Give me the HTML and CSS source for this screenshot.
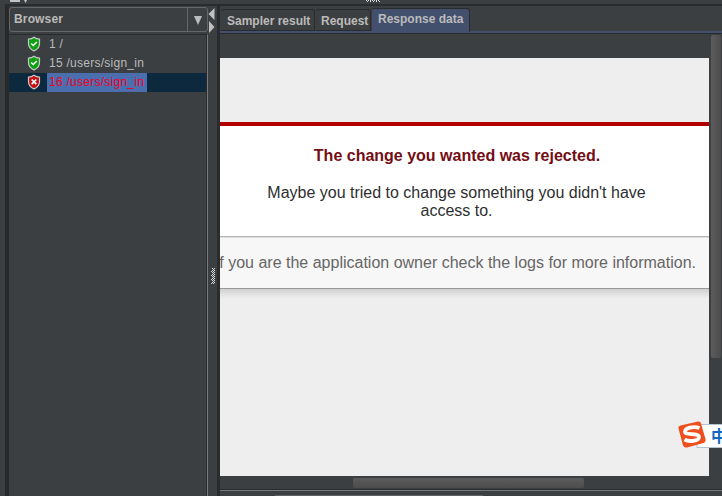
FILE: index.html
```html
<!DOCTYPE html>
<html lang="en">
<head>
<meta charset="utf-8">
<title>Results Tree</title>
<link rel="stylesheet" href="styles.css">
</head>
<body>
<svg class="defs" width="0" height="0">
  <symbol id="shield" viewBox="0 0 14 16">
    <path d="M7 1.200C5.400 2.400 3.500 3 1.500 3.200V7.500C1.500 11 3.500 13.500 7 14.900C10.500 13.500 12.500 11 12.500 7.500V3.200C10.500 3 8.600 2.400 7 1.200Z" fill="currentColor" stroke="#c8c8c8" stroke-width="1.200"/>
  </symbol>
</svg>
<div class="app">
  <header class="top">
    <svg class="top-arrows" width="24" height="4"><path d="M2 0H12V2H2ZM16 0H19L17.500 3Z" fill="#c0c2c4"/></svg>
    <svg class="top-grip" width="16" height="3"><path d="M0 .5H14" stroke="#ddd" stroke-dasharray="1 1"/><path d="M1 1.500H15" stroke="#ddd" stroke-dasharray="1 2"/></svg>
  </header>
  <main class="body">
    <aside class="left">
      <div class="combo"><span class="combo-text"><span class="t-browser">Browser</span></span><span class="combo-btn"><svg width="8" height="10"><path d="M0 0H8L4 9Z" fill="#bbb"/></svg></span></div>
      <div class="tree">
        <div class="row"><svg class="icon ok" width="14" height="16"><use href="#shield"/><path d="M4.200 7.500L6.300 9.500L9.800 5.900" fill="none" stroke="#fff" stroke-width="1.500"/></svg><span class="label">1 /</span></div>
        <div class="row"><svg class="icon ok" width="14" height="16"><use href="#shield"/><path d="M4.200 7.500L6.300 9.500L9.800 5.900" fill="none" stroke="#fff" stroke-width="1.500"/></svg><span class="label">15 /users/sign_in</span></div>
        <div class="row selected"><svg class="icon bad" width="14" height="16"><use href="#shield"/><path d="M4.700 5.500L9.300 10.100M9.300 5.500L4.700 10.100" fill="none" stroke="#fff" stroke-width="1.700"/></svg><span class="label">16 /users/sign_in</span></div>
      </div>
    </aside>
    <div class="divider">
      <svg class="div-arrows" width="8" height="28"><path d="M6.500 2V14L.500 8ZM1 15V27L6.500 21Z" fill="#c0c0c0"/></svg>
      <svg class="grip" width="5" height="16"><path d="M1.500 0V15" stroke="#ddd" stroke-dasharray="1 3"/><path d="M2.500 1V16" stroke="#ddd" stroke-dasharray="1 1"/><path d="M3.500 0V15" stroke="#ddd" stroke-dasharray="1 1"/><path d="M1.500 2V16" stroke="#ddd" stroke-dasharray="1 3"/><path d="M.500 3V16" stroke="#ccc" stroke-dasharray="1 3"/></svg>
    </div>
    <section class="right">
      <nav class="tabs">
        <div class="tab t1"><span>Sampler result</span></div>
        <div class="tab t2"><span>Request</span></div>
        <div class="tab t3 active"><span>Response data</span></div>
      </nav>
      <div class="view">
        <div class="page">
          <div class="dialog">
            <h1>The change you wanted was rejected.</h1>
            <p>Maybe you tried to change something you didn't have<br>access to.</p>
          </div>
          <div class="hint"><span>If you are the application owner check the logs for more information.</span></div>
          <div class="shade"></div>
        </div>
        <div class="vbar"><div class="vthumb"></div></div>
      </div>
      <div class="hbar"><div class="hthumb"></div></div>
      <div class="foot"><div class="fthumb"></div></div>
    </section>
  </main>
  <div class="ime">
    <svg width="46" height="30" viewBox="0 0 46 30">
      <path d="M20 4.500H46V27.500H20Z" fill="#fff" stroke="#b5c3ce"/>
      <path d="M3.500 5.500L21 1.500Q23.500 1 24 3.500L28.500 19Q29 22 26.500 23L10 27.500Q7 28 6 25.500L1.500 8.500Q1 6 3.500 5.500Z" fill="#ed4f1d"/>
      <path d="M22.500 8C16 5.800 8 8 8 11.700C8 15.500 22 12.500 22 17C22 21.300 12 22 7.500 19.500" fill="none" stroke="#fff" stroke-width="3.800"/>
    </svg>
    <span class="zh">中</span>
  </div>
</div>
</body>
</html>
```
FILE: styles.css
```css
* { box-sizing: border-box; }
body { margin: 0; overflow: hidden; background: #3c3f41; font-family: "Liberation Sans", "Noto Sans CJK SC", sans-serif; }
svg { display: block; }
.defs { position: absolute; }
.app { position: relative; width: 722px; height: 496px; overflow: hidden; display: flex; flex-direction: column; }
.top { height: 6px; border-bottom: 2px solid #292b2d; margin-left: 5px; display: flex; flex: none; }
.top-arrows { margin-left: 3px; }
.top-grip { margin-left: 334px; }
.body { flex: 1; min-height: 0; display: flex; margin-left: 5px; }
.left { width: 203px; border-left: 4px solid #27292b; display: flex; flex-direction: column; }
.combo { height: 25px; margin-top: 1px; border: 1px solid #646668; border-radius: 3px; display: flex; color: #bbb; font-size: 12px; font-weight: bold; flex: none; }
.combo-text { flex: 1; padding: 4px 0 0 4px; line-height: 15px; }
.t-browser { letter-spacing: .15px; }
.combo-btn { width: 20px; border-left: 1px solid #646668; padding: 8px 0 0 6px; }
.tree { flex: 1; margin-top: 2px; border-top: 1px solid #292b2d; border-right: 1px solid #77797b; box-shadow: inset -1px 0 #292b2d; }
.row { height: 19px; display: flex; align-items: flex-start; padding-left: 18px; margin-right: 1px; color: #bbb; font-size: 12px; letter-spacing: .26px; }
.icon { margin-top: 1px; }
.row .label { margin-left: 6px; padding: 0 3px 0 2px; height: 19px; line-height: 18px; white-space: nowrap; }
.selected { background: #0d293e; color: #f00020; }
.selected .label { background: #4b6eaf; }
.ok { color: #0da112; }
.bad { color: #c50e12; }
.divider { width: 12px; border-right: 3px solid #292b2d; display: flex; flex-direction: column; }
.div-arrows { margin: 0; }
.grip { margin: 234px 0 0 3px; }
.right { flex: 1; min-width: 0; display: flex; flex-direction: column; }
.tabs { height: 28px; border-bottom: 1px solid #292b2d; box-shadow: inset 0 -2px #43506d; display: flex; align-items: flex-end; padding: 0 0 1px 1px; gap: 1px; }
.tab { height: 22px; margin-bottom: 1px; padding: 4px 0 0 6px; border: solid #292b2d; border-width: 1px 1px 1px 0; border-radius: 3px 3px 0 0; color: #bbb; font-size: 12px; font-weight: bold; line-height: 14px; white-space: nowrap; }
.t1 { width: 94px; }
.t2 { width: 55px; padding-left: 5px; }
.t3 { width: 98px; padding-left: 6px; }
.active { height: 24px; margin-bottom: 0; padding-top: 3px; background: #43506d; border-bottom: 0; }
.view { height: 442px; display: flex; }
.page { width: 489px; height: 418px; margin-top: 24px; padding-top: 64px; background: #eee; overflow: hidden; font-size: 16px; text-align: center; }
.dialog { height: 114px; background: #fff; border-top: 4px solid #b00000; color: #2e2f30; padding-right: 15px; display: flow-root; }
h1 { margin: 21px 0 0; font-size: 16px; line-height: 18px; color: #730e15; }
p { margin: 19px 1px 0 0; line-height: 18px; }
.hint { height: 53px; border: solid #b5b5b5; border-width: 1px 0; border-bottom-color: #999; background: #f7f7f7; color: #666; line-height: 51px; white-space: nowrap; box-shadow: inset 0 1px #ddd; display: flex; justify-content: flex-end; padding-right: 13px; }
.shade { height: 9px; background: linear-gradient(#d0d0d0, #eee); }
.vbar { padding: 1px 0 0 2px; width: 13px; }
.vthumb { width: 10px; height: 323px; border-radius: 2px; background: linear-gradient(90deg, #5c5c5c, #4c4c4c); }
.hbar { height: 14px; padding: 2px 0 0 133px; border-bottom: 1px solid #292b2d; flex: none; }
.hthumb { width: 231px; height: 10px; border-radius: 2px; background: linear-gradient(#5c5c5c, #4c4c4c); }
.foot { height: 6px; border-top: 1px solid #77797b; padding: 4px 0 0 55px; background: #3c3f41; }
.fthumb { width: 208px; height: 1px; background: #606263; }
.ime { position: absolute; left: 677px; top: 420px; width: 45px; height: 30px; overflow: hidden; }
.zh { position: absolute; left: 34px; top: 5px; font: 700 16px/20px "Noto Sans CJK SC", sans-serif; color: #1167c2; }
```
